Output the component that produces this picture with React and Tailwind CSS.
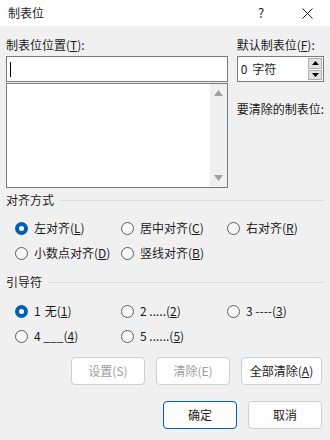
import React from 'react'

function Radio({ checked, children, className = '' }) {
  return (
    <div className={'flex items-center gap-[6px] h-[16px] ' + className}>
      {checked ? (
        <span className="w-[13px] h-[13px] rounded-full bg-[#005fb8] flex items-center justify-center">
          <span className="w-[5px] h-[5px] rounded-full bg-white"></span>
        </span>
      ) : (
        <span className="w-[13px] h-[13px] rounded-full border border-[#5d5d5d] bg-[#f7f7f7]"></span>
      )}
      <span className="whitespace-nowrap">{children}</span>
    </div>
  )
}

function Group({ title }) {
  return (
    <div className="flex items-center gap-[6px] h-[16px]">
      <span>{title}</span>
      <span className="flex-1 h-px bg-[#dcdcdc]"></span>
    </div>
  )
}

function Btn({ children, disabled, primary, className = '' }) {
  return (
    <button
      className={
        'h-[28px] rounded-[4px] bg-[#fdfdfd] border text-[12px] ' +
        (primary ? 'border-[#005fb8] ' : 'border-[#d0d0d0] ') +
        (disabled ? 'text-[#9d9d9d] ' : 'text-[#1b1b1b] ') +
        className
      }
    >
      {children}
    </button>
  )
}

export default function App() {
  return (
    <div
      className="w-[330px] h-[440px] bg-[#f0f0f0] text-[12px] leading-[16px] text-[#1b1b1b] overflow-hidden"
      style={{ fontFamily: '"Microsoft YaHei UI", "Noto Sans CJK SC", sans-serif' }}
    >
      <div className="h-[26px] bg-white flex items-center pl-[8px]">
        <span className="text-[12px]">制表位</span>
        <span className="ml-auto w-[20px] text-center text-[13px]">?</span>
        <span className="ml-[13px] w-[46px] flex justify-center">
          <svg width="11" height="11" viewBox="0 0 11 11">
            <path d="M0.5 0.5L10.5 10.5M10.5 0.5L0.5 10.5" stroke="#1b1b1b" strokeWidth="1" />
          </svg>
        </span>
      </div>

      <div className="px-[6px] pt-[11px]">
        <div className="flex gap-[9px]">
          <div className="w-[222px]">
            <div className="h-[16px]">
              制表位位置(<span className="underline">T</span>):
            </div>
            <div className="mt-[3px] h-[26px] bg-white border border-[#7a7a7a] flex items-center pl-[3px]">
              <span className="w-px h-[15px] bg-black"></span>
            </div>
            <div className="mt-px h-[105px] bg-white border border-[#7a7a7a] flex">
              <div className="flex-1"></div>
              <div className="w-[17px] bg-[#f0f0f0] flex flex-col items-center justify-between py-[6px]">
                <svg width="9" height="6" viewBox="0 0 9 6"><path d="M0 6L4.5 0L9 6Z" fill="#a0a0a0" /></svg>
                <svg width="9" height="6" viewBox="0 0 9 6"><path d="M0 0L4.5 6L9 0Z" fill="#a0a0a0" /></svg>
              </div>
            </div>
          </div>
          <div className="flex-1">
            <div className="h-[16px] whitespace-nowrap">
              默认制表位(<span className="underline">F</span>):
            </div>
            <div className="mt-[3px] h-[26px] bg-white border border-[#7a7a7a] flex items-center">
              <span className="pl-[3px] flex-1 whitespace-nowrap">0<span className="ml-[5px]">字符</span></span>
              <div className="w-[15px] h-full flex flex-col gap-px py-px pr-px">
                <div className="flex-1 bg-[#e1e1e1] border border-[#adadad] flex items-center justify-center">
                  <svg width="7" height="4" viewBox="0 0 7 4"><path d="M0 4L3.5 0L7 4Z" fill="#000" /></svg>
                </div>
                <div className="flex-1 bg-[#e1e1e1] border border-[#adadad] flex items-center justify-center">
                  <svg width="7" height="4" viewBox="0 0 7 4"><path d="M0 0L3.5 4L7 0Z" fill="#000" /></svg>
                </div>
              </div>
            </div>
            <div className="mt-[19px] h-[16px] whitespace-nowrap">要清除的制表位:</div>
          </div>
        </div>

        <div className="mt-[4px]">
          <Group title="对齐方式" />
        </div>
        <div className="pl-[9px] mt-[12px] grid grid-cols-[106px_106px_1fr] gap-y-[9px]">
          <Radio checked>左对齐(<span className="underline">L</span>)</Radio>
          <Radio>居中对齐(<span className="underline">C</span>)</Radio>
          <Radio>右对齐(<span className="underline">R</span>)</Radio>
          <Radio>小数点对齐(<span className="underline">D</span>)</Radio>
          <Radio>竖线对齐(<span className="underline">B</span>)</Radio>
        </div>

        <div className="mt-[13px]">
          <Group title="引导符" />
        </div>
        <div className="pl-[9px] mt-[13px] grid grid-cols-[106px_106px_1fr] gap-y-[9px]">
          <Radio checked>1<span className="ml-[4px]">无(<span className="underline">1</span>)</span></Radio>
          <Radio>2 .....(<span className="underline">2</span>)</Radio>
          <Radio>3 ----(<span className="underline">3</span>)</Radio>
          <Radio>4 ___(<span className="underline">4</span>)</Radio>
          <Radio>5 ......(<span className="underline">5</span>)</Radio>
        </div>

        <div className="mt-[13px] flex justify-end gap-[11px] pr-[2px]">
          <Btn disabled className="w-[74px]">设置(S)</Btn>
          <Btn disabled className="w-[74px]">清除(E)</Btn>
          <Btn className="w-[81px]">全部清除(<span className="underline">A</span>)</Btn>
        </div>

        <div className="mt-[16px] flex justify-end gap-[11px] pr-[2px]">
          <Btn primary className="w-[74px]">确定</Btn>
          <Btn className="w-[74px]">取消</Btn>
        </div>
      </div>
    </div>
  )
}
